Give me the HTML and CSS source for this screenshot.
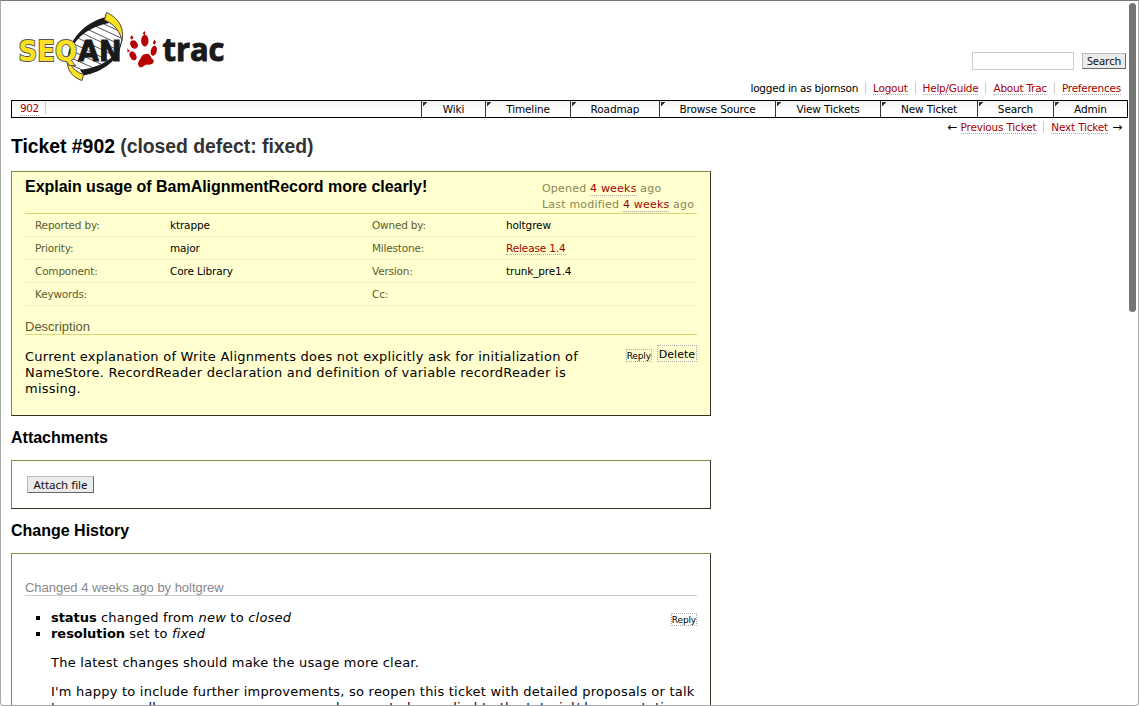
FILE: index.html
```html
<!DOCTYPE html>
<html lang="en">
<head>
<meta charset="utf-8">
<title>#902 (Explain usage of BamAlignmentRecord more clearly!)</title>
<link rel="stylesheet" href="styles.css">
</head>
<body>
<div class="window">
<div class="page">
  <header class="banner">
    <svg class="logo" width="220" height="76" viewBox="10 8 220 76" role="img" aria-label="SeqAn trac">
      <path d="M122 40 C122 58 104 70 82 76 L67 64 C69 44 82 25 108 18Z" fill="#fff"/>
      <path d="M100 22L121 32M93 25L121 38M87 29L121 45M82 33L120 51M78 38L117 57M74 44L112 62M70 50L105 66M69 57L98 70M69 64L91 74" stroke="#444" stroke-width=".9"/>
      <path d="M67.500 60 C68 42 82 23 106 17 L109 23 C94 26 83 33 78 39 C72 46 70 52 69 60Z" fill="#1a1a1a"/>
      <path d="M121 41 C119 56 103 67 80 70 L84 75.500 C105 71 119 60 122 41Z" fill="#1a1a1a"/>
      <path d="M106.500 12.500 C117 17 125 27 122 41 C120 31 114 24 104.500 20Z" fill="#fbe122" stroke="#444" stroke-width="1"/>
      <path d="M69 53 C67 61 72 71 83.500 74.500 L82 80.500 C71 77 64 67 69 53Z" fill="#fbe122" stroke="#444" stroke-width="1"/>
      <text class="logo-seq" x="18.500" y="61" textLength="58.500" lengthAdjust="spacingAndGlyphs">SEQ</text>
      <text class="logo-an" x="78" y="61" textLength="43.500" lengthAdjust="spacingAndGlyphs">AN</text>
      <g fill="#b60205">
        <ellipse cx="134" cy="44.500" rx="3.500" ry="4.400" transform="rotate(-28 134 44.500)"/>
        <ellipse cx="144.800" cy="40.600" rx="3.700" ry="5.800"/>
        <ellipse cx="153.800" cy="50.800" rx="3" ry="5.200" transform="rotate(14 154 50.800)"/>
        <ellipse cx="133" cy="55.800" rx="3.100" ry="4.700" transform="rotate(-28 133 55.800)"/>
        <path d="M131.500 35l2 2.800-1.600 2-1.700-1.800ZM144.200 31l1.300 1.600-.8 2.900-1.900-1.900ZM154.500 39.800l1.500 2.100-1.600 2.900-1.800-1.900ZM127.300 48.200l2.500 2.800-2.200 1.700Z"/>
        <path d="M146 54 C151 53 150 58 153 59.500 C155.500 63 151 65.500 147 64.500 C144 65 142.500 68.500 139.500 67 C136 63 140 60 141 57.500 C142 55 144 54 146 54Z"/>
      </g>
      <text class="logo-trac" x="162.500" y="61" textLength="62" lengthAdjust="spacingAndGlyphs">trac</text>
    </svg>
    <form class="search"><input class="search-box" type="text"><button class="button search-button" type="button">Search</button></form>
  </header>
  <ul class="metanav">
    <li>logged in as bjornson</li>
    <li><a>Logout</a></li>
    <li><a>Help/Guide</a></li>
    <li><a>About Trac</a></li>
    <li><a>Preferences</a></li>
  </ul>
  <nav class="mainnav">
    <div class="crumbs"><a>902</a></div>
    <div class="tab w64">Wiki</div>
    <div class="tab w85">Timeline</div>
    <div class="tab w89">Roadmap</div>
    <div class="tab w116">Browse Source</div>
    <div class="tab w105">View Tickets</div>
    <div class="tab w97">New Ticket</div>
    <div class="tab w76">Search</div>
    <div class="tab w74">Admin</div>
  </nav>
  <div class="ctxtnav"><span><span class="arrow">←</span> <a>Previous Ticket</a></span><span class="next"><a>Next Ticket</a> <span class="arrow">→</span></span></div>

  <h1>Ticket #902 <span class="status">(closed defect: fixed)</span></h1>
  <section class="box ticket">
    <div class="ticket-head">
      <h2>Explain usage of BamAlignmentRecord more clearly!</h2>
      <div class="date"><p>Opened <a>4 weeks</a> ago</p><p>Last modified <a>4 weeks</a> ago</p></div>
    </div>
    <div class="properties">
      <div class="prop-row"><span class="label">Reported by:</span><span>ktrappe</span><span class="label">Owned by:</span><span>holtgrew</span></div>
      <div class="prop-row"><span class="label">Priority:</span><span>major</span><span class="label">Milestone:</span><span><a>Release 1.4</a></span></div>
      <div class="prop-row"><span class="label">Component:</span><span>Core Library</span><span class="label">Version:</span><span>trunk_pre1.4</span></div>
      <div class="prop-row"><span class="label">Keywords:</span><span></span><span class="label">Cc:</span><span></span></div>
    </div>
    <h3 class="desc-title">Description</h3>
    <div class="description">
      <p class="prose">Current explanation of Write Alignments does not explicitly ask for initialization of<br>NameStore. RecordReader declaration and definition of variable recordReader is<br>missing.</p>
      <div class="actions"><span class="inline-button small">Reply</span><span class="inline-button">Delete</span></div>
    </div>
  </section>

  <h2 class="section-title">Attachments</h2>
  <section class="box attachments"><button class="button attach" type="button">Attach file</button></section>

  <h2 class="section-title">Change History</h2>
  <section class="box changelog">
    <h3 class="change-title">Changed <a>4 weeks</a> ago by holtgrew</h3>
    <div class="change">
      <ul class="changes">
        <li><b>status</b> changed from <i>new</i> to <i>closed</i></li>
        <li><b>resolution</b> set to <i>fixed</i></li>
      </ul>
      <span class="inline-button small">Reply</span>
    </div>
    <p class="comment prose">The latest changes should make the usage more clear.</p>
    <p class="comment prose">I'm happy to include further improvements, so reopen this ticket with detailed proposals or talk<br>to me personally, as you see some more changes to be applied to the tutorial/documentation.</p>
  </section>
</div>
<div class="scrollbar"></div>
</div>
</body>
</html>
```
FILE: styles.css
```css
* { box-sizing: border-box; }
body { margin: 0; background: #fff; color: #000; font-family: "DejaVu Sans", sans-serif; font-size: 13px; line-height: 16px; }
h1, h2, h3, p, ul { margin: 0; padding: 0; }
ul { list-style: none; }
a { color: #a80000; border-bottom: 1px dotted #aaa; }
.window { position: relative; width: 1139px; height: 706px; overflow: hidden; border: 1px solid #aaa; border-top-color: #777; border-radius: 0 0 4px 4px; }
.page { width: 1117px; margin-left: 10px; }
.scrollbar { position: absolute; left: 1128px; top: 2px; width: 7px; height: 309px; border-radius: 4px; background: #757575; }

.banner { display: flex; justify-content: space-between; height: 80px; padding-top: 7px; }
.logo { display: block; margin-left: -1px; }
.logo text { font-family: "Open Sans", sans-serif; font-weight: 700; }
.logo .logo-seq { font-family: "DejaVu Sans", sans-serif; font-size: 29px; fill: #fbe122; stroke: #555; stroke-width: 2px; paint-order: stroke; }
.logo .logo-an { font-family: "DejaVu Sans", sans-serif; font-size: 29px; fill: #1a1a1a; stroke: #1a1a1a; stroke-width: 1px; }
.logo .logo-trac { font-size: 33px; fill: #1a1a1a; stroke: #1a1a1a; stroke-width: 1px; }
.search { display: flex; align-items: flex-start; gap: 8px; margin-top: 44px; padding-right: 2px; }
.search-box { width: 102px; height: 18px; border: 1px solid #ccc; padding: 0; }
.button { color: #111; background: #ebebeb; border: 1px solid #bbb; border-right-color: #666; border-bottom-color: #666; padding: 0; }
.search-button { width: 44px; height: 16px; margin-top: 1px; font: 11px/14px "Noto Sans", sans-serif; letter-spacing: -.1px; }

.metanav, .mainnav, .ctxtnav, .properties { font-size: 10.500px; letter-spacing: -.13px; }
.metanav { display: flex; justify-content: flex-end; height: 19px; padding-right: 7px; line-height: 13px; letter-spacing: -.24px; }
.metanav li { height: 12px; margin-top: 1px; }
.metanav li + li { margin-left: 7px; padding-left: 7px; border-left: 1px solid #ccc; }
.mainnav { display: flex; height: 18px; border: 1px solid #000; background: linear-gradient(#f3f3f3, #fff 60%); line-height: 17px; }
.crumbs { flex: 1; display: flex; align-items: flex-start; padding-left: 8px; padding-top: 1px; line-height: 13px; letter-spacing: -.4px; }
.crumbs::after { content: ""; width: 1px; height: 12px; margin-left: 6px; background: #ccc; }
.tab { border-left: 1px solid #333; text-align: center; background: linear-gradient(135deg, #333 3px, transparent 3.500px) 1px 1px / 4px 4px no-repeat; }
.w64 { width: 64px; } .w85 { width: 85px; } .w89 { width: 89px; } .w116 { width: 116px; }
.w105 { width: 105px; } .w97 { width: 97px; } .w76 { width: 76px; } .w74 { width: 74px; }
.ctxtnav { display: flex; justify-content: flex-end; height: 16px; padding-right: 6px; padding-top: 3px; line-height: 13px; letter-spacing: -.2px; }
.arrow { font-size: 12px; line-height: 10px; }
.next { height: 12px; margin-left: 7px; padding-left: 7px; border-left: 1px solid #ccc; }
.next .arrow { margin-left: 1px; }

h1 { font: bold 19.400px/24px "Liberation Sans", sans-serif; height: 37px; letter-spacing: -.03px; }
.status { color: #333; }
.box { width: 700px; border: 1px solid #884; border-right-color: #332; border-bottom-color: #332; padding: 0 13px; }
.ticket { height: 245px; background: #ffffd0; }
.ticket-head { display: flex; justify-content: space-between; height: 42px; border-bottom: 1px solid #d7d775; }
h2 { font: bold 16px/20px "Liberation Sans", sans-serif; }
.ticket-head h2 { padding-top: 5px; letter-spacing: -.03px; }
.date { width: 155px; padding-top: 9px; font-size: 11px; line-height: 16px; letter-spacing: .2px; color: #885; white-space: nowrap; }
.prop-row { display: grid; grid-template-columns: 135px 202px 134px 1fr; height: 23px; padding-left: 10px; border-bottom: 1px dotted #e4e4c0; line-height: 23px; }
.prop-row a { display: inline-block; line-height: 12px; }
.label { color: #5c5c2c; letter-spacing: -.2px; }
h3 { font: 13px/15px "Liberation Sans", sans-serif; }
.desc-title { margin-top: 13px; color: #5c5c2c; border-bottom: 1px solid #d7d775; }
.description { display: flex; justify-content: space-between; }
.prose { white-space: nowrap; letter-spacing: .235px; }
.description .prose { padding-top: 14px; }
.actions { display: flex; align-items: flex-end; gap: 5px; height: 27px; }
.inline-button { border: 1px dotted #aaa; font-size: 11px; line-height: 17px; height: 17px; padding: 0 1px; }
.small { font: 9px/12px "DejaVu Sans", sans-serif; letter-spacing: -.15px; height: 13px; padding: 0; }
.section-title { margin-top: 12px; margin-bottom: 12px; }
.attachments { height: 49px; padding-top: 15px; padding-left: 15px; }
.attach { display: block; width: 67px; height: 17px; font: 11.500px/15px "Noto Sans", sans-serif; }
.changelog { height: 200px; }
.change-title { margin-top: 26px; color: #888; border-bottom: 1px solid #ccc; height: 16px; letter-spacing: -.03px; }
.change-title a { color: #888; border-bottom: 0; }
.change { display: flex; justify-content: space-between; align-items: flex-start; margin-top: 14px; }
.change .inline-button { margin-top: 3px; }
.changes { padding-left: 26px; list-style: square; letter-spacing: .22px; }
.changes b { letter-spacing: -.05px; }
.comment { margin-left: 26px; margin-top: 13px; letter-spacing: .225px; }
```
